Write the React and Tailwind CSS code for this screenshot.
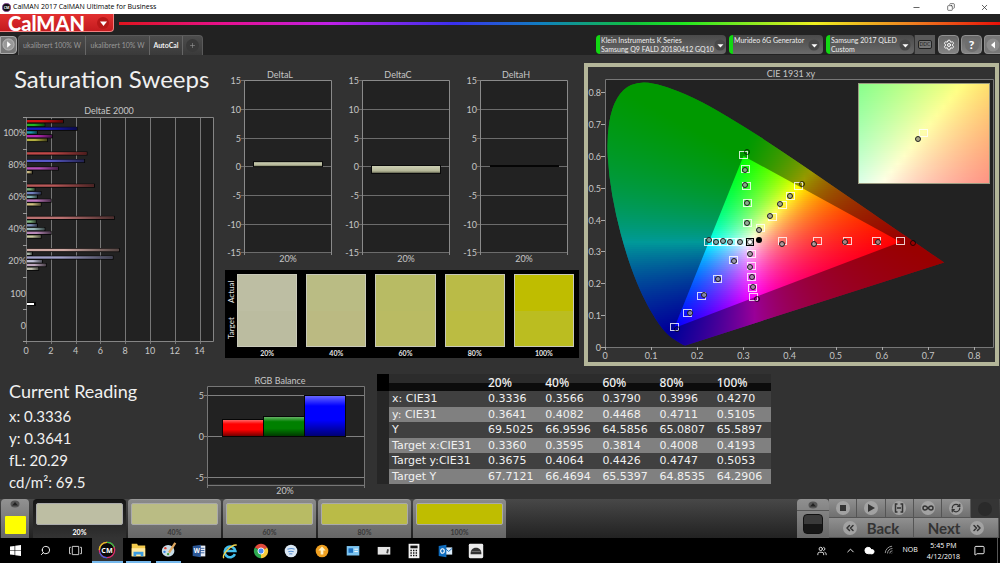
import React from 'react';
import {
  ChevronUp,
  ChevronsLeft,
  ChevronsRight,
  Cloud,
  Copy,
  Infinity as InfinityIcon,
  MessageSquare,
  Minus,
  Plus,
  RefreshCw,
  Search,
  Settings,
  Users,
  Wifi,
  X,
} from 'lucide-react';

const levels = ['20%', '40%', '60%', '80%', '100%'];

const swatches = [
  { label: '20%', actual: 'bg-[#bdbea3]', target: 'bg-[#bbbca0]' },
  { label: '40%', actual: 'bg-[#babc84]', target: 'bg-[#bbba82]' },
  { label: '60%', actual: 'bg-[#b8bb64]', target: 'bg-[#babb63]' },
  { label: '80%', actual: 'bg-[#babb47]', target: 'bg-[#bbbc42]' },
  { label: '100%', actual: 'bg-[#bfbd00]', target: 'bg-[#bbbd20]' },
];

const tableRows = [
  ['x: CIE31', '0.3336', '0.3566', '0.3790', '0.3996', '0.4270'],
  ['y: CIE31', '0.3641', '0.4082', '0.4468', '0.4711', '0.5105'],
  ['Y', '69.5025', '66.9596', '64.5856', '65.0807', '65.5897'],
  ['Target x:CIE31', '0.3360', '0.3595', '0.3814', '0.4008', '0.4193'],
  ['Target y:CIE31', '0.3675', '0.4064', '0.4426', '0.4747', '0.5053'],
  ['Target Y', '67.7121', '66.4694', '65.5397', '64.8535', '64.2906'],
];

// DeltaE 2000 per saturation level, in R G B C M Y order
const deltaE = [
  { label: '100%', values: [2.9, 1.4, 4, 0.8, 2, 1.6], colors: ['#d01414', '#22b422', '#1a1ac0', '#1c9ab0', '#b428b4', '#b4b040'] },
  { label: '80%', values: [4.8, 0, 4.6, 0, 2.5, 0.4], colors: ['#c04848', '#50b450', '#5858c8', '#50a8b0', '#b450b8', '#c8b880'] },
  { label: '60%', values: [5.4, 0.6, 1.1, 0.8, 1.9, 1.1], colors: ['#b85858', '#78b478', '#7080c0', '#80b0b0', '#c078c0', '#d0c080'] },
  { label: '40%', values: [7, 0.7, 0.8, 1.4, 1.9, 1.1], colors: ['#b87070', '#80b480', '#8090b8', '#98b8b8', '#b888b8', '#c8c8a0'] },
  { label: '20%', values: [7.4, 0.4, 6.9, 1.2, 1.5, 0.9], colors: ['#d0aaa4', '#a8b8a8', '#a0a0c8', '#c0c0d8', '#c0a8c0', '#c0c0b0'] },
];

const targets = [
  [156, 88], [158, 102], [159, 119], [160, 136], [160, 156],
  [211, 119], [203, 129], [195, 138], [185, 150], [173, 161],
  [313, 174], [289, 174], [260, 174], [230, 174], [195, 174],
  [121, 175], [129, 175], [136, 175], [144, 175], [153, 175],
  [166, 230], [165, 221], [164, 210], [164, 199], [164, 187],
  [87, 260], [100, 246], [114, 229], [130, 212], [146, 193],
];

const readings = [
  [157, 103], [157, 118], [159, 136], [159, 156],
  [202, 129], [192, 137], [182, 149], [171, 163],
  [290, 175], [257, 175], [226, 177], [194, 177],
  [121, 173], [128, 175], [135, 174], [142, 175], [152, 175],
  [165, 220], [164, 210], [162, 200], [162, 187],
  [102, 246], [116, 228], [130, 212], [146, 194],
];

// readings that fall outside of the gamut triangle
const outerReadings = [[159, 85], [214, 117], [325, 176], [169, 232], [89, 262]];

const locus = [
  [0.1741, 0.005], [0.1689, 0.0069], [0.1644, 0.0109], [0.1566, 0.0177], [0.144, 0.0297],
  [0.1355, 0.0399], [0.1241, 0.0578], [0.1096, 0.0868], [0.0913, 0.1327], [0.0687, 0.2007],
  [0.0454, 0.295], [0.0235, 0.4127], [0.0082, 0.5384], [0.0039, 0.6548], [0.0139, 0.7502],
  [0.0389, 0.812], [0.0743, 0.8338], [0.1142, 0.8262], [0.1547, 0.8059], [0.1929, 0.7816],
  [0.2296, 0.7543], [0.3016, 0.6923], [0.3731, 0.6245], [0.4441, 0.5547], [0.5125, 0.4866],
  [0.5752, 0.4242], [0.627, 0.3725], [0.6658, 0.334], [0.6915, 0.3083], [0.719, 0.2809], [0.7347, 0.2653],
];

const px = (x) => 17 + x * 461.6;
const py = (y) => 280 - y * 318.4;

const locusPath = (() => {
  const p = locus.map(([x, y]) => [px(x), py(y)]);
  let d = `M${p[0][0]} ${p[0][1]}`;
  for (let i = 1; i < p.length - 1; i++) {
    const mx = (p[i][0] + p[i + 1][0]) / 2;
    const my = (p[i][1] + p[i + 1][1]) / 2;
    d += `Q${p[i][0]} ${p[i][1]} ${mx} ${my}`;
  }
  return `${d}L${p[p.length - 1][0]} ${p[p.length - 1][1]}Z`;
})();

const trianglePath = `M${px(0.64)} ${py(0.33)}L${px(0.3)} ${py(0.6)}L${px(0.15)} ${py(0.06)}Z`;

const xyToRgb = (x, y) => {
  const yy = Math.max(y, 0.002);
  const X = x / yy;
  const Z = (1 - x - yy) / yy;
  const rgb = [
    3.2406 * X - 1.5372 - 0.4986 * Z,
    -0.9689 * X + 1.8758 + 0.0415 * Z,
    0.0557 * X - 0.204 + 1.057 * Z,
  ];
  const max = Math.max(...rgb);
  return `rgb(${rgb.map((v) => Math.round(Math.max(0, v / max) * 255)).join(',')})`;
};

// Chromaticity colours, one horizontal gradient for each strip
const ColorField = ({ id, left, top, width, height, x0, x1, y0, y1, strip, stops }) => {
  const rows = Math.ceil(height / strip);
  return (
    <g>
      {Array.from({ length: rows }, (_, r) => {
        const y = y1 - ((r + 0.5) / rows) * (y1 - y0);
        return (
          <g key={r}>
            <linearGradient id={`${id}${r}`}>
              {Array.from({ length: stops + 1 }, (_, s) => (
                <stop key={s} offset={s / stops} stopColor={xyToRgb(x0 + (s / stops) * (x1 - x0), y)} />
              ))}
            </linearGradient>
            <rect
              x={left}
              y={top + r * strip}
              width={width}
              height={Math.min(strip, height - r * strip)}
              fill={`url(#${id}${r})`}
              shapeRendering="crispEdges"
            />
          </g>
        );
      })}
    </g>
  );
};

const chartText = "fill-[#c6c6c6] font-['Lato',sans-serif] text-[9px]";

const DeltaEChart = () => (
  <svg viewBox="0 0 225 260" className={`w-full ${chartText}`}>
    <defs>
      <linearGradient id="barShade">
        <stop offset="0.4" stopColor="#000" stopOpacity="0" />
        <stop offset="1" stopColor="#000" stopOpacity="0.6" />
      </linearGradient>
    </defs>
    <text x="109" y="14" textAnchor="middle">DeltaE 2000</text>
    <rect x="26" y="17" width="187" height="224" fill="#222" />
    {[0, 2, 4, 6, 8, 10, 12, 14].map((v) => (
      <g key={v}>
        <path d={`M${Math.round(26 + v * 12.4) + 0.5} 17V244`} stroke="#777" />
        <text x={26 + v * 12.4} y="254" textAnchor="middle">{v}</text>
      </g>
    ))}
    <path d="M26 17.500H213.500V241.500H26" fill="none" stroke="#858585" />
    {[17, 49, 81, 113, 145, 177, 209, 241].map((y) => (
      <path key={y} d={`M23 ${y}.5H27`} stroke="#999" />
    ))}
    {deltaE.map((group, g) => (
      <g key={group.label}>
        <text x="26" y={36 + g * 32} textAnchor="end">{group.label}</text>
        {group.values.map((v, i) =>
          v ? (
            <g key={i}>
              <rect x="27" y={19.3 + g * 32.2 + i * 3.75} width={v * 12.4 + 1} height="4" fill="#080808" />
              <rect x="27" y={20 + g * 32.2 + i * 3.75} width={v * 12.4} height="2.4" fill={group.colors[i]} />
              <rect x="27" y={20 + g * 32.2 + i * 3.75} width={v * 12.4} height="2.4" fill="url(#barShade)" />
            </g>
          ) : null
        )}
      </g>
    ))}
    <text x="26" y="197" textAnchor="end">100</text>
    <text x="26" y="229" textAnchor="end">0</text>
    <rect x="27" y="202" width="9" height="4" fill="#080808" />
    <rect x="27" y="203" width="7" height="2" fill="#fff" />
  </svg>
);

const DeltaChart = ({ title, value }) => {
  const yOf = (v) => 100.2 - v * 5.74;
  return (
    <svg viewBox="0 0 118 200" className={`w-full ${chartText}`}>
      <defs>
        <linearGradient id="khaki" x2="0" y2="1">
          <stop offset="0" stopColor="#cccfb4" />
          <stop offset="0.7" stopColor="#b5b798" />
          <stop offset="1" stopColor="#74765f" />
        </linearGradient>
      </defs>
      <text x="55" y="12" textAnchor="middle">{title}</text>
      <rect x="19" y="14" width="87" height="173" fill="#222" />
      {[15, 10, 5, 0, -5, -10, -15].map((v) => (
        <g key={v}>
          <path d={`M16 ${Math.round(yOf(v)) + 0.5}H106`} stroke="#6c6c6c" />
          <text x="16" y={yOf(v) + 4} textAnchor="end">{v}</text>
        </g>
      ))}
      <path d="M19.500 189V14.500H106.500V189" fill="none" stroke="#8a8a8a" />
      {value === 0 ? (
        <rect x="29" y="99" width="69" height="2" fill="#050505" />
      ) : (
        <g>
          <rect x="28" y={Math.min(yOf(value), 100) - 1} width="70" height={Math.abs(value) * 5.74 + 2} fill="#0a0a0a" />
          <rect x="29" y={Math.min(yOf(value), 100)} width="68" height={Math.abs(value) * 5.74} fill="url(#khaki)" />
        </g>
      )}
      <text x="63" y="196" textAnchor="middle">20%</text>
    </svg>
  );
};

const CieChart = () => (
  <svg viewBox="0 0 407 295" className={`w-full ${chartText}`}>
    <defs>
      <clipPath id="locus">
        <path d={locusPath} />
      </clipPath>
    </defs>
    <text x="203" y="10" textAnchor="middle">CIE 1931 xy</text>
    <rect x="17" y="12" width="388" height="268" fill="#222" />
    <g clipPath="url(#locus)">
      <ColorField id="f" left={17} top={12} width={342} height={268} x0={0} x1={342 / 461.6} y0={0} y1={268 / 318.4} strip={2} stops={48} />
    </g>
    <path d={locusPath + trianglePath} fillRule="evenodd" fill="#000" fillOpacity="0.4" />
    <path d="M17.500 280.500V12.500H405.500V280.500Z" fill="none" stroke="#777" />
    {[0, 0.1, 0.2, 0.3, 0.4, 0.5, 0.6, 0.7, 0.8].map((v) => (
      <g key={v}>
        <path d={`M${Math.round(px(v)) + 0.5} 280v3M13 ${Math.round(py(v)) + 0.5}h4`} stroke="#aaa" />
        <text x={px(v)} y="292" textAnchor="middle">{v}</text>
        <text x="13" y={py(v) + 4} textAnchor="end">{v}</text>
      </g>
    ))}
    <g fill="none" stroke="#fff" strokeOpacity="0.8">
      {targets.map(([x, y], i) => (
        <rect key={i} x={x - 4.5} y={y - 3.5} width="8" height="7" />
      ))}
    </g>
    <g fill="#999" fillOpacity="0.8" stroke="#1c1c1c">
      {readings.map(([x, y], i) => (
        <circle key={i} cx={x} cy={y} r="2.500" />
      ))}
    </g>
    <g fill="none" stroke="#000" strokeOpacity="0.7">
      {outerReadings.map(([x, y], i) => (
        <circle key={i} cx={x} cy={y} r="2.500" />
      ))}
    </g>
    <rect x="158.500" y="171.500" width="7" height="7" fill="#ccc" stroke="#000" />
    <circle cx="162" cy="175" r="2.500" fill="#fff" stroke="#555" />
    <circle cx="171" cy="173" r="3" fill="#000" />
    <ColorField id="z" left={271} top={16} width={130} height={100} x0={0.3087} x1={0.3643} y0={0.339} y1={0.396} strip={2} stops={20} />
    <rect x="270.500" y="16.500" width="131" height="100" fill="none" stroke="#9a9a80" />
    <rect x="331.500" y="62.500" width="8" height="7" fill="none" stroke="#fff" strokeOpacity="0.8" />
    <circle cx="330" cy="72" r="2.500" fill="#a8a888" stroke="#222" />
  </svg>
);

const RgbBalance = () => (
  <svg viewBox="0 0 180 125" className={`w-full ${chartText}`}>
    <defs>
      <linearGradient id="gloss" x2="0" y2="1">
        <stop offset="0" stopColor="#fff" stopOpacity="0.4" />
        <stop offset="0.25" stopColor="#fff" stopOpacity="0" />
        <stop offset="0.6" stopColor="#000" stopOpacity="0" />
        <stop offset="1" stopColor="#000" stopOpacity="0.55" />
      </linearGradient>
    </defs>
    <text x="88" y="12" textAnchor="middle">RGB Balance</text>
    <rect x="15" y="14" width="157" height="98" fill="#222" />
    {[[5, 23], [0, 64], [-5, 105]].map(([v, y]) => (
      <g key={v}>
        <path d={`M12 ${y}.5H172`} stroke="#808080" />
        <text x="12" y={y + 4} textAnchor="end">{v}</text>
      </g>
    ))}
    <path d="M15.500 116V14.500H172.500V116M15 113.500H172" fill="none" stroke="#777" />
    {[[31, 48, '#f00'], [72, 45, '#008000'], [113, 24, '#00f']].map(([x, y, color]) => (
      <g key={color}>
        <rect x={x - 1} y={y - 1} width="42" height={66 - y} fill="#060606" />
        <rect x={x} y={y} width="40" height={64 - y} fill={color} />
        <rect x={x} y={y} width="40" height={64 - y} fill="url(#gloss)" />
      </g>
    ))}
    <text x="93" y="122" textAnchor="middle">20%</text>
  </svg>
);

const Caret = () => (
  <svg viewBox="0 0 14 14" className="mr-[3px] h-3 w-3 shrink-0">
    <circle cx="7" cy="7" r="6.500" fill="#484848" />
    <path d="M4 6h7l-3.500 4z" fill="#fff" />
  </svg>
);

const Device = ({ className, lines }) => (
  <button
    aria-haspopup="menu"
    className={`flex h-[19px] items-center rounded-sm border-l-4 border-[#12d812] bg-gradient-to-b from-[#4a4a4a] to-[#6a6a6a] pl-px text-left text-[7px] leading-[9px] whitespace-nowrap text-[#eee] ${className}`}
  >
    <span className="h-[18px] flex-1">
      {lines.map((line) => (
        <span key={line} className="block">{line}</span>
      ))}
    </span>
    <Caret />
  </button>
);

const toolButton =
  'flex h-[19px] w-[21px] shrink-0 items-center justify-center rounded-sm border border-[#909090] bg-gradient-to-b from-[#666] to-[#848484] text-white';

const Header = () => (
  <header className="bg-[#222]">
    <div className="flex h-[19px] items-start">
      <button className="flex h-[18px] w-[114px] shrink-0 items-center justify-between rounded-br-sm border-r border-b border-[#f08080] bg-gradient-to-b from-[#e23030] to-[#c41a1e] pr-[3px] pl-2 text-white">
        <span className="text-[20px] leading-[18px] font-black">CalMAN</span>
        <svg viewBox="0 0 14 14" className="h-[14px] w-[14px]">
          <circle cx="7" cy="7" r="6" fill="#b81818" />
          <path d="M4 5.500h7L7.500 10z" fill="#fff" />
        </svg>
      </button>
      <div className="mt-[8px] ml-[5px] h-[3px] flex-1 bg-[linear-gradient(90deg,#e0141e_0%,#e81090_12%,#c020e8_24%,#3a30f0_38%,#1080c0_48%,#10c040_58%,#20e820_64%,#f0f020_79%,#f08020_90%,#e81008_100%)]" />
    </div>
    <div className="flex h-[22px] items-center pt-px">
      <button aria-label="Run" className="flex h-[18px] w-[17px] items-center justify-center rounded-r-sm border border-[#aaa] bg-[#777]">
        <svg viewBox="0 0 14 14" className="h-[13px] w-[13px]">
          <circle cx="7" cy="7" r="6" fill="#999" stroke="#bbb" />
          <path d="M5.500 3.500v7l4-3.500z" fill="#fff" />
        </svg>
      </button>
      <nav className="ml-px flex h-[20px] rounded-t-sm border-x border-t border-[#5a5a5a] bg-gradient-to-b from-[#4c4c4c] to-[#3a3a3a] text-[7px] whitespace-nowrap text-[#999]">
        <button className="w-[67px] border-r border-[#666]">ukalibrert 100% W</button>
        <button className="w-[64px] border-r border-[#666]">ukalibrert 10% W</button>
        <button className="w-[33px] border-r border-[#666] font-bold text-[#f0f0f0]">AutoCal</button>
        <button aria-label="Add tab" className="flex w-[19px] items-center justify-center">
          <span className="flex h-[13px] w-[13px] items-center justify-center rounded-full bg-[#393939]">
            <Plus size={7} />
          </span>
        </button>
      </nav>
      <div className="ml-auto flex gap-[3px]">
        <Device className="w-[130px]" lines={['Klein Instruments K Series', 'Samsung Q9 FALD 20180412 GQ10']} />
        <Device className="w-[94px]" lines={['Murideo 6G Generator']} />
        <div className="flex">
          <Device className="w-[88px]" lines={['Samsung 2017 QLED', 'Custom']} />
          <button className="flex h-[19px] w-[21px] items-center justify-center border-l border-[#333] bg-[#5a5a5a]">
            <span className="rounded-[2px] border border-[#222] bg-[#777] px-px text-[5px] leading-[7px] text-[#222]">DDC</span>
          </button>
        </div>
        <div className="flex gap-[2px]">
          <button aria-label="Settings" className={toolButton}>
            <Settings size={12} />
          </button>
          <button aria-label="Help" className={`${toolButton} text-[12px] font-black`}>
            <span className="flex h-[14px] w-[14px] items-center justify-center rounded-full bg-[#6e6e6e]">?</span>
          </button>
          <button aria-label="Collapse" className="flex h-[19px] w-[16px] items-center justify-center rounded-l-sm border border-r-0 border-[#909090] bg-[#777]">
            <svg viewBox="0 0 14 14" className="h-[14px] w-[14px]">
              <circle cx="7" cy="7" r="6.500" fill="#8c8c8c" />
              <path d="M9 3.500v7L5 7z" fill="#fff" />
            </svg>
          </button>
        </div>
      </div>
    </div>
  </header>
);

const Swatches = () => (
  <div className="mt-[4px] flex h-[88px] bg-black pt-[4px] pr-[5px] text-[7px] leading-[12px] font-bold text-[#e4e4e4]">
    <div className="h-[72px] w-3 shrink-0 text-[8px] font-normal [writing-mode:vertical-rl]">
      <div className="flex h-full rotate-180 justify-around">
        <span>Target</span>
        <span>Actual</span>
      </div>
    </div>
    <div className="grid flex-1 grid-cols-5 gap-[9px]">
      {swatches.map((s) => (
        <div key={s.label} className="text-center">
          <div className="h-[73px] border border-[#c8c8b8]">
            <div className={`h-1/2 ${s.actual}`} />
            <div className={`h-1/2 ${s.target}`} />
          </div>
          {s.label}
        </div>
      ))}
    </div>
  </div>
);

const ReadingTable = () => (
  <table className="mt-[3px] h-[110px] w-[394px] table-fixed border-collapse font-['DejaVu_Sans',sans-serif] text-[11px] leading-[13px] text-[#f0f0f0]">
    <colgroup>
      <col className="w-3" />
      <col className="w-24" />
      <col />
      <col />
      <col />
      <col />
      <col />
    </colgroup>
    <thead>
      <tr className="h-[17px] bg-gradient-to-b from-[#2c2c2c] from-50% to-[#0c0c0c] to-50% text-left">
        <td className="bg-black p-0" />
        <td className="p-0" />
        {levels.map((l) => (
          <th key={l} scope="col" className="p-0 pl-[3px] font-['Noto_Sans',sans-serif] text-[12px] font-medium">{l}</th>
        ))}
      </tr>
    </thead>
    <tbody>
      {tableRows.map((row) => (
        <tr key={row[0]} className="odd:bg-[#404040] even:bg-[#808080]">
          <td className="bg-[#262626] p-0" />
          <th scope="row" className="p-0 pl-[3px] text-left font-normal whitespace-nowrap">{row[0]}</th>
          {row.slice(1).map((v, i) => (
            <td key={i} className="p-0 pl-[3px]">{v}</td>
          ))}
        </tr>
      ))}
    </tbody>
  </table>
);

const roundIcon = 'flex h-[14px] w-[14px] items-center justify-center rounded-full bg-[#a2a2a2] text-[#333]';
const smallButton = 'flex items-center justify-center border-r border-b border-[#555] bg-gradient-to-b from-[#909090] to-[#707070]';

const UpKnob = () => (
  <svg viewBox="0 0 10 8" className="h-2 w-[10px]">
    <ellipse cx="5" cy="4" rx="4.500" ry="3.500" fill="#555" />
    <path d="M2 5.500h6L5 2z" fill="#222" />
  </svg>
);

const Transport = () => (
  <div className="ml-auto flex h-[39px] w-[202px] shrink-0">
    <div className="flex w-8 flex-col items-center rounded-t-sm bg-gradient-to-b from-[#909090] to-[#686868]">
      <button aria-label="Expand" className="flex h-[12px] w-full items-center justify-center border-b border-[#555]">
        <UpKnob />
      </button>
      <button aria-label="Pattern window" className="mt-[3px] h-[20px] w-[20px] rounded-sm border border-[#111] bg-gradient-to-b from-[#3a3a3a] from-50% to-[#161616] to-50%" />
    </div>
    <div className="flex flex-1 flex-col">
      <div className="grid h-[19px] grid-cols-6">
        <button aria-label="Stop" className={smallButton}>
          <span className={roundIcon}><span className="h-[6px] w-[6px] bg-[#333]" /></span>
        </button>
        <button aria-label="Play" className={smallButton}>
          <span className={roundIcon}>
            <svg viewBox="0 0 8 8" className="h-2 w-2"><path d="M1 0v8l7-4z" fill="#333" /></svg>
          </span>
        </button>
        <button aria-label="Read series" className={smallButton}>
          <span className={roundIcon}>
            <svg viewBox="0 0 10 10" className="h-[10px] w-[10px]" fill="none" stroke="#333" strokeWidth="1.500">
              <path d="M3.500 1H1.500v8h2M6.500 1h2v8h-2M3 5h4" />
            </svg>
          </span>
        </button>
        <button aria-label="Continuous" className={smallButton}>
          <span className={roundIcon}><InfinityIcon size={12} strokeWidth={3} /></span>
        </button>
        <button aria-label="Refresh" className={smallButton}>
          <span className={roundIcon}><RefreshCw size={10} strokeWidth={3} /></span>
        </button>
        <div className="flex items-center justify-center bg-[#353535]">
          <span className="h-[14px] w-[14px] rounded-full bg-[#2a2a2a]" />
        </div>
      </div>
      <div className="grid h-[20px] grid-cols-2 text-[15px] leading-[18px] font-bold text-[#333]">
        <button className={`${smallButton} gap-[10px]`}>
          <span className={roundIcon}><ChevronsLeft size={12} strokeWidth={3} /></span>
          Back
        </button>
        <button className={`${smallButton} gap-[10px]`}>
          Next
          <span className={roundIcon}><ChevronsRight size={12} strokeWidth={3} /></span>
        </button>
      </div>
    </div>
  </div>
);

const PatternBar = () => (
  <div className="flex h-[39px] bg-gradient-to-b from-[#484848] to-[#222] pr-px">
    <div className="mr-[4px] ml-px flex w-[28px] shrink-0 flex-col items-center rounded-t-sm bg-gradient-to-b from-[#929292] to-[#666]">
      <button aria-label="Expand" className="flex h-[10px] items-center"><UpKnob /></button>
      <button aria-label="Yellow" className="mt-[7px] h-[18px] w-[21px] rounded-[1px] bg-[#ff0]" />
    </div>
    <div className="flex gap-[2px] text-[7px] leading-[10px] font-bold text-[#383838]">
      {swatches.map((s, i) => (
        <button
          key={s.label}
          className={`flex w-[93px] flex-col items-center rounded-t-sm pt-[3px] ${
            i === 0
              ? 'border-t border-[#111] bg-gradient-to-b from-[#161616] to-[#333] text-white'
              : 'border-t border-[#999] bg-gradient-to-b from-[#8a8a8a] to-[#666]'
          }`}
        >
          <span className={`mb-[2px] h-[22px] w-[87px] rounded-[2px] border border-[#aaa] ${s.actual}`} />
          {s.label}
        </button>
      ))}
    </div>
    <Transport />
  </div>
);

const taskIcons = [
  {
    name: 'CalMAN',
    art: (
      <>
        <circle cx="10" cy="10" r="8.500" fill="#0a0a0a" stroke="#e03070" strokeWidth="1.500" />
        <path d="M1.500 10A8.500 8.500 0 0 1 10 1.500" fill="none" stroke="#d8c020" strokeWidth="1.500" />
        <path d="M10 1.500A8.500 8.500 0 0 1 18 7" fill="none" stroke="#30c040" strokeWidth="1.500" />
        <path d="M2 13a8.500 8.500 0 0 0 8 5.500" fill="none" stroke="#4060e0" strokeWidth="1.500" />
        <text x="10" y="13" textAnchor="middle" fill="#fff" className="text-[8px] font-bold">CM</text>
      </>
    ),
  },
  {
    name: 'File Explorer',
    art: (
      <>
        <path d="M3 3h6l1 2h8v12H3z" fill="#f2c94c" />
        <path d="M3 8h15v9H3z" fill="#ffe9a0" />
        <path d="M5 17v-5h11v5h-3v-2H8v2z" fill="#3a9be0" />
      </>
    ),
  },
  {
    name: 'Paint',
    art: (
      <>
        <ellipse cx="9" cy="11" rx="7" ry="6.500" fill="#c8dce8" />
        <circle cx="6" cy="8" r="1.300" fill="#e04030" />
        <circle cx="5" cy="12" r="1.300" fill="#3080e0" />
        <circle cx="9" cy="14.500" r="1.300" fill="#40a040" />
        <path d="M17 2l-7 11" stroke="#e0a860" strokeWidth="2.500" />
      </>
    ),
  },
  {
    name: 'Word',
    art: (
      <>
        <path d="M10 4h7v12h-7z" fill="#e8eef8" />
        <path d="M11 7h5M11 9.500h5M11 12h5" stroke="#2b5797" />
        <path d="M3 4.500L12 3v14l-9-1.500z" fill="#2b5797" />
        <text x="7.500" y="12.500" textAnchor="middle" fill="#fff" className="text-[7px] font-bold">W</text>
      </>
    ),
  },
  {
    name: 'Internet Explorer',
    art: (
      <>
        <path d="M15.500 13.500A6 6 0 1 1 16 10H5" fill="none" stroke="#45c0ee" strokeWidth="2.800" />
        <path d="M3 18C1 14 12 2 17.500 3.500" fill="none" stroke="#f2d34a" strokeWidth="1.500" />
      </>
    ),
  },
  {
    name: 'Chrome',
    art: (
      <>
        <path d="M10 10L3.100 6A8 8 0 0 1 16.900 6z" fill="#e24a3b" />
        <path d="M10 10L16.900 6A8 8 0 0 1 10 18z" fill="#f7cb3c" />
        <path d="M10 10L10 18A8 8 0 0 1 3.100 6z" fill="#2da94f" />
        <circle cx="10" cy="10" r="3.400" fill="#4a8af4" stroke="#fff" />
      </>
    ),
  },
  {
    name: 'Stream',
    art: (
      <>
        <circle cx="10" cy="10" r="7" fill="#dbe8f4" />
        <path d="M6 8c3-1 6-1 8 0M7 10.800c2-.6 4-.6 6 0M8 13.300c1.300-.4 2.500-.4 3.500 0" fill="none" stroke="#5a90d0" strokeWidth="1.200" />
      </>
    ),
  },
  {
    name: 'Updater',
    art: (
      <>
        <circle cx="10" cy="10" r="7" fill="#f0a020" />
        <path d="M10 5l4 4.500h-2.500V14h-3V9.500H6z" fill="#fff0c0" />
      </>
    ),
  },
  {
    name: 'Remote',
    art: (
      <>
        <rect x="3" y="4.500" width="14" height="10.500" fill="#7cc4f0" />
        <rect x="5" y="7" width="5" height="5" fill="#1b6fc0" />
        <path d="M11.500 8h4M11.500 10.500h4" stroke="#fff" />
      </>
    ),
  },
  {
    name: 'Meter',
    art: (
      <>
        <rect x="3" y="5.500" width="14" height="8.500" fill="#e4e4e4" />
        <path d="M14.500 8l-1 4.500" stroke="#444" strokeWidth="2" />
      </>
    ),
  },
  {
    name: 'Calculator',
    art: (
      <>
        <rect x="4" y="2" width="12" height="16" fill="#f4f4f4" />
        <path d="M6 4h8v3H6z" fill="#111" />
        <path d="M6 9.500h8.500M6 12.300h8.500M6 15h8.500" stroke="#111" strokeWidth="1.600" strokeDasharray="1.600 1.300" />
      </>
    ),
  },
  {
    name: 'Outlook',
    art: (
      <>
        <path d="M10 6h8v8h-8z" fill="#dcecfa" />
        <path d="M10 7l4 3.500L18 7" fill="none" stroke="#0f6cbd" />
        <path d="M3 4.500L11.500 3v14L3 15.500z" fill="#0f6cbd" />
        <ellipse cx="7.200" cy="10" rx="2" ry="2.500" fill="none" stroke="#fff" strokeWidth="1.200" />
      </>
    ),
  },
  {
    name: 'Colorimeter',
    art: (
      <>
        <rect x="2" y="2" width="16" height="16" rx="1.500" fill="#ececec" />
        <path d="M4 13.500C4 9 6 6.500 10 6.500s6 2.500 6 7z" fill="#333" />
        <path d="M5 10.500h10" stroke="#777" />
      </>
    ),
  },
];

const Taskbar = () => (
  <footer className="flex h-[25px] items-center bg-black font-['Open_Sans',sans-serif] text-white">
    <div className="mr-[2px] grid w-[90px] shrink-0 grid-cols-3 justify-items-center">
      <button aria-label="Start">
        <svg viewBox="0 0 12 12" className="h-[11px] w-[11px]" fill="#fff">
          <path d="M0 1.700L5 1v4.700H0zM5.700.9L12 0v5.700H5.700zM0 6.300h5V11l-5-.7zM5.700 6.300H12V12l-6.300-.9z" />
        </svg>
      </button>
      <button aria-label="Search"><Search size={11} className="-scale-x-100" /></button>
      <button aria-label="Task view">
        <svg viewBox="0 0 14 12" className="h-[11px] w-[13px]" fill="none" stroke="#ddd">
          <path d="M3.500 1.500h7v9h-7zM2 2.500H.500v7H2M12 2.500h1.500v7H12" />
        </svg>
      </button>
    </div>
    <div className="grid w-[399px] grid-cols-13">
      {taskIcons.map((icon, i) => (
        <button
          key={icon.name}
          aria-label={icon.name}
          className={`flex h-[25px] items-center justify-center ${i === 0 ? 'bg-[#333]' : ''}`}
        >
          <span className={`flex h-[25px] items-center justify-center ${i === 0 ? 'w-full' : 'w-[25px]'} ${i < 3 ? 'border-b-2 border-[#76b9ed]' : ''}`}>
            <svg viewBox="0 0 20 20" className="h-[18px] w-[18px]">{icon.art}</svg>
          </span>
        </button>
      ))}
    </div>
    <div className="ml-auto flex items-center">
      <Users size={10} className="mr-[18px] ml-[3px]" />
      <ChevronUp size={11} className="mr-[8px]" />
      <Cloud size={11} fill="#fff" className="mr-[9px]" />
      <Wifi size={11} className="mr-[8px] -rotate-45 text-[#999]" />
      <span className="mr-[9px] text-[7px]">NOB</span>
      <span className="mr-[14px] text-center text-[7px] leading-[11px]">
        5:45 PM
        <br />
        4/12/2018
      </span>
      <button aria-label="Notifications" className="mr-[12px]"><MessageSquare size={11} /></button>
      <span className="h-[25px] w-[3px] border-l border-[#555]" />
    </div>
  </footer>
);

const App = () => {
  return (
    <div className="flex min-h-screen flex-col bg-[#323232] font-['Lato',sans-serif]">
      <div className="flex h-[14px] items-center bg-white pl-[2px] font-['Open_Sans',sans-serif] text-[7px] text-black">
        <svg viewBox="0 0 10 10" className="mr-[2px] h-[9px] w-[9px]">
          <circle cx="5" cy="5" r="4.500" fill="#111" stroke="#804090" />
          <text x="5" y="6.500" textAnchor="middle" fill="#fff" className="text-[4px] font-bold">CM</text>
        </svg>
        <span>CalMAN 2017 CalMAN Ultimate for Business</span>
        <div className="ml-auto flex w-[88px] justify-between pr-[11px] text-[#333]">
          <button aria-label="Minimize"><Minus size={9} strokeWidth={2} /></button>
          <button aria-label="Restore"><Copy size={8} strokeWidth={2} className="-scale-x-100" /></button>
          <button aria-label="Close"><X size={9} strokeWidth={2} /></button>
        </div>
      </div>
      <Header />
      <main className="flex-1 text-[#f0f0f0]">
        <div className="grid grid-cols-[225fr_355fr_420fr]">
          <section className="pt-[8px]">
            <h1 className="mb-[5px] pl-[14px] text-[24px] leading-[32px] whitespace-nowrap">Saturation Sweeps</h1>
            <DeltaEChart />
          </section>
          <section className="pt-[11px] pr-px">
            <div className="grid grid-cols-3">
              <DeltaChart title="DeltaL" value={0.7} />
              <DeltaChart title="DeltaC" value={-1.2} />
              <DeltaChart title="DeltaH" value={0} />
            </div>
            <Swatches />
          </section>
          <section className="pt-[8px] pr-px pl-[4px]">
            <div className="border-4 border-[#b4b699]">
              <CieChart />
            </div>
          </section>
        </div>
        <div className="grid grid-cols-[192fr_180fr_628fr] pt-[5px]">
          <section className="pl-[9px] text-[15px] leading-[22px]">
            <h2 className="pt-[8px] pb-[2px] text-[18px] leading-[24px] whitespace-nowrap">Current Reading</h2>
            <p>x: 0.3336</p>
            <p>y: 0.3641</p>
            <p>fL: 20.29</p>
            <p>cd/m²: 69.5</p>
          </section>
          <section className="pt-px">
            <RgbBalance />
          </section>
          <section className="pl-[5px]">
            <ReadingTable />
          </section>
        </div>
      </main>
      <PatternBar />
      <Taskbar />
    </div>
  );
};

export default App;
